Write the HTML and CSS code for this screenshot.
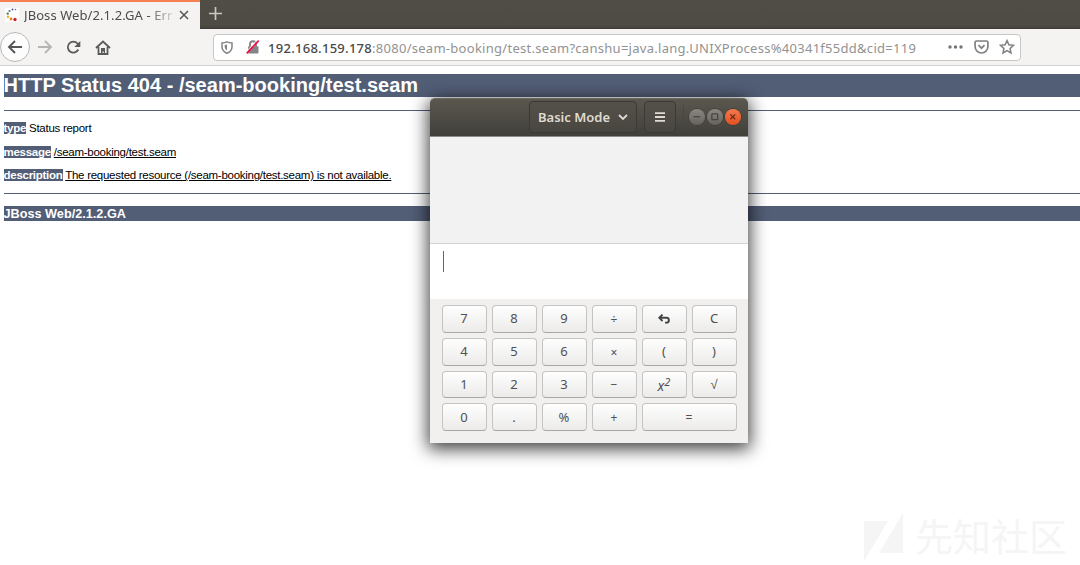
FILE: index.html
```html
<!DOCTYPE html>
<html lang="en">
<head>
<meta charset="utf-8">
<title>JBoss Web/2.1.2.GA - Error report</title>
<link rel="stylesheet" href="styles.css">
</head>
<body>
<div class="tabs">
  <div class="tab">
    <svg class="favicon" width="14" height="14" viewBox="0 0 14 14"><rect width="14" height="14" fill="#fff"/><circle cx="10.500" cy="1.500" r=".8" fill="#7b5aa6"/><circle cx="7.500" cy="1.500" r=".9" fill="#4d4d99"/><circle cx="4.500" cy="3" r="1.100" fill="#4878a8"/><circle cx="2.700" cy="5.600" r="1.200" fill="#418955"/><circle cx="3" cy="8.700" r="1.300" fill="#e5b32c"/><circle cx="6" cy="11" r="1.400" fill="#e87b25"/><circle cx="10" cy="11.500" r="1.700" fill="#d4222a"/></svg>
    <span class="tab-title">JBoss Web/2.1.2.GA - Err</span>
    <svg class="tab-close" width="10" height="10" viewBox="0 0 10 10"><path d="M1 1l8 8M9 1l-8 8"/></svg>
  </div>
  <svg class="new-tab" width="13" height="13" viewBox="0 0 13 13"><path d="M6.500 0v13M0 6.500h13"/></svg>
</div>
<div class="toolbar">
  <span class="back"><svg width="16" height="14" viewBox="0 0 16 14"><path d="M15 7H2M8 1L2 7l6 6"/></svg></span>
  <svg class="forward" width="16" height="14" viewBox="0 0 16 14"><path d="M1 7h13M8 1l6 6-6 6"/></svg>
  <svg class="reload" width="15" height="15" viewBox="0 0 15 15"><path d="M12.300 9.500A5.500 5.500 0 1 1 11.500 3.500L13 5"/><path class="solid" d="M14.300 1v6H8.300z"/></svg>
  <svg class="home" width="16" height="15" viewBox="0 0 16 15"><path d="M1 8l7-6.500L15 8M3.500 7v7h9V7"/><path class="door" d="M6 8h4v6H8.800v-2.500H7.500V14H6z"/></svg>
  <div class="urlbar">
    <svg class="shield" width="12" height="13" viewBox="0 0 12 13"><path d="M6 .9C4.300 1.500 2.500 1.800 1 1.900V6c0 3 2 5 5 6.200C9 11 11 9 11 6V1.900C9.500 1.800 7.700 1.500 6 .9z"/><path class="core" d="M6 3.500v6C4.500 8.500 3.700 7.400 3.700 5.500V4z"/></svg>
    <i class="divider"></i>
    <svg class="lock" width="14" height="14" viewBox="0 0 14 14"><path fill="none" stroke="#858585" stroke-width="1.900" d="M4 7V4.200a3 3 0 0 1 6 0v3"/><rect x="2" y="6.200" width="10.500" height="7.300" rx="1" fill="#858585"/><path stroke="#fff" stroke-width="1" d="M0 12L11.300 0"/><path stroke="#f0144f" stroke-width="1.800" d="M.7 13.400L12.700 .7"/></svg>
    <span class="host">192.168.159.178</span><span class="path">:8080/seam-booking/test.seam?canshu=java.lang.UNIXProcess%40341f55dd&amp;cid=119</span>
    <svg class="dots" width="15" height="4" viewBox="0 0 15 4"><circle cx="2" cy="2" r="1.700"/><circle cx="7.500" cy="2" r="1.700"/><circle cx="13" cy="2" r="1.700"/></svg>
    <svg class="pocket" width="15" height="14" viewBox="0 0 15 14"><path d="M2.500 1h10a1.400 1.400 0 0 1 1.400 1.400v4.200a6.400 6.400 0 0 1-12.800 0V2.400A1.400 1.400 0 0 1 2.500 1zM4.500 5.200l3 3 3-3"/></svg>
    <svg class="star" width="16" height="16" viewBox="0 0 16 16"><path d="M8 1.600l1.900 4.200 4.600.5-3.400 3.100.9 4.600-4-2.300L4 14l.9-4.600-3.400-3.100 4.600-.5z"/></svg>
  </div>
</div>
<main class="page">
  <h1>HTTP Status 404 - /seam-booking/test.seam</h1>
  <hr>
  <p><b>type</b> Status report</p>
  <p><b>message</b> <u>/seam-booking/test.seam</u></p>
  <p><b>description</b> <u>The requested resource (/seam-booking/test.seam) is not available.</u></p>
  <hr>
  <h3>JBoss Web/2.1.2.GA</h3>
</main>
<section class="calc">
  <header>
    <button class="mode"><span>Basic Mode</span><svg width="10" height="7" viewBox="0 0 10 7"><path d="M1 1l4 4 4-4"/></svg></button>
    <button class="menu"><svg width="10" height="10" viewBox="0 0 10 10"><path d="M0 1.200h10M0 5h10M0 8.800h10"/></svg></button>
    <i class="sep"></i>
    <span class="win"><svg width="16" height="16" viewBox="0 0 16 16"><path d="M4.500 8h7"/></svg></span>
    <span class="win"><svg width="16" height="16" viewBox="0 0 16 16"><path d="M5 5h6v6H5z"/></svg></span>
    <span class="win close"><svg width="16" height="16" viewBox="0 0 16 16"><path d="M5.500 5.500l5 5M10.500 5.500l-5 5"/></svg></span>
  </header>
  <div class="history"></div>
  <div class="entry"><i class="caret"></i></div>
  <div class="keys">
    <button>7</button><button>8</button><button>9</button><button class="op">÷</button><button><svg width="12" height="10" viewBox="0 0 12 10"><path fill="none" stroke="#454545" stroke-width="1.900" d="M2 3.800h6.500a2.300 2.300 0 0 1 0 4.800H7M4.500 .6L1.300 3.800l3.200 3.200"/></svg></button><button>C</button>
    <button>4</button><button>5</button><button>6</button><button class="op">×</button><button>(</button><button>)</button>
    <button>1</button><button>2</button><button>3</button><button class="op">−</button><button class="sq"><em>x<sup>2</sup></em></button><button>√</button>
    <button>0</button><button>.</button><button>%</button><button class="op">+</button><button class="op wide">=</button>
  </div>
</section>
<div class="mark">
  <svg width="40" height="48" viewBox="0 0 40 48"><path d="M0 8h24L0 48zM39 0v40H15z"/></svg>
  <span>先知社区</span>
</div>
</body>
</html>
```
FILE: styles.css
```css
* { box-sizing: border-box; }
body { margin: 0; width: 1080px; height: 565px; overflow: hidden; position: relative; background: #fff; font-family: "Noto Sans", sans-serif; }
svg { flex: none; display: block; }
.tabs { height: 29px; display: flex; background: linear-gradient(#504e45, #4d4b43 90%, #3c3b37); }
.tab { width: 200px; height: 29px; background: #f4f3f2; border-top: 2px solid #f58050; display: flex; align-items: center; padding: 0 11px 2px 5px; }
.tab-title { width: 154px; margin-left: 5px; font-size: 13px; letter-spacing: .08px; color: #4c4c4c; white-space: nowrap; mask-image: linear-gradient(90deg, #000 80%, transparent 100%); }
.tab-close { margin-left: auto; fill: none; stroke: #555; stroke-width: 1.5; }
.new-tab { margin: 7px 0 0 9px; fill: none; stroke: #c9c7c0; stroke-width: 1.7; }
.toolbar { height: 37px; display: flex; align-items: center; background: #f4f3f2; border-bottom: 1px solid #d4d3d2; }
.toolbar > svg { fill: none; stroke: #5a5a5a; stroke-width: 1.8; }
.back { width: 30px; height: 30px; border: 1px solid #b8b8b8; border-radius: 50%; background: #fcfcfc; display: flex; align-items: center; justify-content: center; fill: none; stroke: #555; stroke-width: 1.9; }
.toolbar > .forward { margin-left: 7px; stroke: #b5b5b4; }
.toolbar > .reload { margin-left: 13px; }
.toolbar > .reload .solid, .home .door { fill: #5a5a5a; stroke: none; }
.home { margin-left: 14px; }
.urlbar { width: 808px; height: 27px; margin-left: 102px; border: 1px solid #c8c7c6; border-radius: 4px; background: #fff; display: flex; align-items: center; padding: 0 5px 0 7px; white-space: pre; font-size: 13px; letter-spacing: .28px; line-height: 18px; }
.urlbar span { padding-top: 1px; }
.shield { fill: none; stroke: #858585; stroke-width: 1.5; }
.shield .core { fill: #858585; stroke: none; }
.divider { width: 1px; height: 20px; background: #ccc; margin: 0 6px 0 7px; }
.host { margin-left: 8px; width: 104px; color: #484848; font-weight: 500; }
.path { width: 544px; color: #929292; }
.dots { margin-left: 32px; fill: #757575; }
.pocket { margin-left: 11px; fill: none; stroke: #808080; stroke-width: 1.7; }
.star { margin-left: 10px; fill: none; stroke: #808080; stroke-width: 1.5; }
.page { padding: 8px 0 0 3.500px; font-family: "Liberation Sans", Arial, sans-serif; color: #000; }
h1, h3, .page b { background: #525d76; color: #fff; }
h1 { margin: 0; height: 23px; line-height: 23px; font-size: 20px; letter-spacing: .01px; white-space: nowrap; }
h1 + hr { margin-top: 13px; }
hr { border: 0; height: 1px; background: #525d76; margin: 11px 0 10px; }
.page p { margin: 0 0 9.700px; height: 14px; line-height: 14px; font-size: 11.500px; letter-spacing: -.27px; white-space: nowrap; }
.page u { text-underline-offset: 1px; }
h3 { margin: 12px 0 0; height: 15px; line-height: 16px; font-size: 12.700px; }
.calc { position: absolute; left: 430px; top: 98px; width: 318px; height: 345px; background: #f1f0ef; border-radius: 5px 5px 0 0; box-shadow: 0 4px 17px 2px rgba(0,0,0,.75); }
.calc header { height: 39px; display: flex; align-items: center; padding: 0 0 1px 99px; background: linear-gradient(#5a574e, #403f3a); border-top: 1px solid #6a6860; border-bottom: 1px solid #8c8b88; border-radius: 5px 5px 0 0; }
.calc button { padding: 0; font-family: inherit; display: flex; align-items: center; justify-content: center; }
.calc header button { height: 32px; border: 1px solid #3a3934; border-radius: 4px; background: rgba(80,78,70,.4); color: #dfdbd2; fill: none; stroke: #dfdbd2; stroke-width: 1.8; }
.calc .mode { width: 108px; font-size: 13px; font-weight: 600; }
.mode span { stroke: none; width: 74px; white-space: nowrap; text-align: left; }
.mode svg { margin-left: 6px; }
.calc header .menu { width: 32px; margin-left: 7px; }
.sep { width: 1px; height: 25px; margin: 0 5px 0 7px; background: #484740; }
.win { width: 15.600px; height: 15.600px; margin-right: 2.600px; border-radius: 50%; background: linear-gradient(#8a8881, #64625a); box-shadow: 0 0 0 .5px #353430; fill: none; stroke: #393833; }
.win svg { width: 100%; height: 100%; }
.close { background: linear-gradient(#f4794e, #e25020); stroke: #6a2814; stroke-width: 1.200; }
.history { height: 107px; background: #f2f2f2; border-bottom: 1px solid #d3d2d1; }
.entry { height: 55px; background: #fff; padding: 7px 12px; }
.caret { display: block; width: 1.500px; height: 21px; background: #666; margin-left: .5px; }
.keys { padding: 6px 11.500px; display: grid; grid-template-columns: repeat(6, 45px); grid-auto-rows: 27.800px; gap: 5px; }
.keys button { border: 1px solid #c5c4c2; border-bottom-color: #a8a7a5; border-radius: 4px; background: linear-gradient(#fefefe, #ecebea); color: #505050; font-size: 13px; line-height: 1; }
.keys .op { font-size: 12px; padding-top: 2px; }
.keys .wide { grid-column: span 2; }
.calc .sq { padding-top: 3px; font-size: 14px; }
.sq sup { font-size: 11px; vertical-align: 5px; line-height: 0; }
.mark { position: absolute; left: 864px; top: 513px; display: flex; align-items: center; color: #f5f5f5; fill: #f5f5f5; }
.mark span { margin: -4px 0 0 11px; font: 38px/48px "Noto Sans CJK SC", sans-serif; white-space: nowrap; }
```
